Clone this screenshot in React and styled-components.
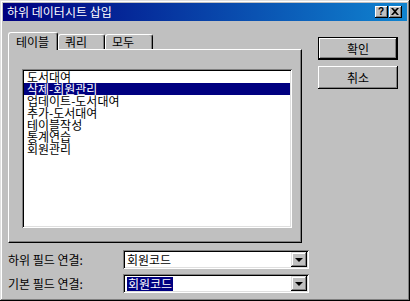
import React from 'react'
import styled, { createGlobalStyle } from 'styled-components'

const GlobalStyle = createGlobalStyle`
    html, body {
        margin:0;
        padding:0;
        background:#c0c0c0;
    }
    body {
        font-family:'Noto Sans CJK KR', 'Noto Sans', sans-serif;
        font-size:12px;
    }
`

const Window = styled.div`
    box-sizing:border-box;
    width:410px;
    height:301px;
    padding:3px;
    background:#c0c0c0;
    box-shadow:inset -1px -1px #000, inset 1px 1px #dfdfdf, inset -2px -2px #808080, inset 2px 2px #fff;
    display:flex;
    flex-direction:column;
`

const TitleBar = styled.div`
    height:18px;
    display:flex;
    align-items:center;
    padding:0 5px 0 4px;
    background:linear-gradient(90deg, #000080, #1084d0);
    color:#fff;
    font-size:12px;
    line-height:18px;
`

const TitleText = styled.div`
    flex:1;
    white-space:nowrap;
`

const CaptionButton = styled.div`
    box-sizing:border-box;
    width:13px;
    height:12px;
    margin-left:${p => p.gap || 0}px;
    background:#c0c0c0;
    box-shadow:inset -1px -1px #000, inset 1px 1px #fff, inset -2px -2px #808080;
    display:flex;
    align-items:center;
    justify-content:center;
    color:#000;
    font-family:'Liberation Sans', Arial, sans-serif;
    font-weight:bold;
    font-size:10px;
    line-height:10px;
    padding:0 1px 1px 0;
`

const Body = styled.div`
    flex:1;
    display:flex;
    padding:0 0 0 5px;
`

const LeftColumn = styled.div`
    width:301px;
    padding-top:11px;
`

const TabStrip = styled.div`
    display:flex;
    align-items:flex-end;
    height:17px;
    width:294px;
`

const Tab = styled.div`
    box-sizing:border-box;
    position:relative;
    width:${p => p.w}px;
    height:${p => (p.active ? 18 : 15)}px;
    margin-bottom:${p => (p.active ? -1 : 0)}px;
    z-index:${p => (p.active ? 1 : 0)};
    padding-left:${p => p.pad}px;
    background:#c0c0c0;
    border-top:1px solid #fff;
    border-left:1px solid #fff;
    border-right:1px solid #000;
    border-radius:3px 3px 0 0;
    box-shadow:inset -1px 0 #808080;
    line-height:${p => (p.active ? 17 : 14)}px;
    color:#000;
    white-space:nowrap;
`

const Panel = styled.div`
    box-sizing:border-box;
    width:294px;
    height:194px;
    padding:19px 0 0 13px;
    border-top:1px solid #fff;
    border-left:1px solid #fff;
    border-right:1px solid #000;
    border-bottom:1px solid #000;
    box-shadow:inset -1px -1px #808080;
`

const ListBox = styled.div`
    box-sizing:border-box;
    width:270px;
    height:159px;
    padding:2px;
    background:#fff;
    box-shadow:inset 1px 1px #808080, inset -1px -1px #fff, inset 2px 2px #000, inset -2px -2px #dfdfdf;
`

const ListItem = styled.div`
    height:12px;
    line-height:12px;
    padding-left:3px;
    background:${p => (p.selected ? '#000080' : 'transparent')};
    color:${p => (p.selected ? '#fff' : '#000')};
    white-space:nowrap;
`

const FieldGrid = styled.div`
    display:grid;
    grid-template-columns:115px 186px;
    row-gap:5px;
    margin-top:7px;
    align-items:center;
`

const Label = styled.div`
    color:#000;
    white-space:nowrap;
`

const Combo = styled.div`
    box-sizing:border-box;
    height:19px;
    padding:2px;
    display:flex;
    background:#fff;
    box-shadow:inset 1px 1px #808080, inset -1px -1px #fff, inset 2px 2px #000, inset -2px -2px #dfdfdf;
`

const ComboText = styled.div`
    flex:1;
    padding-left:2px;
    line-height:15px;
    color:#000;
`

const Highlight = styled.span`
    display:inline-block;
    background:#000080;
    color:#fff;
    line-height:14px;
    padding:0 1px;
`

const DropButton = styled.div`
    box-sizing:border-box;
    width:16px;
    height:15px;
    background:#c0c0c0;
    box-shadow:inset -1px -1px #000, inset 1px 1px #dfdfdf, inset -2px -2px #808080, inset 2px 2px #fff;
    display:flex;
    align-items:center;
    justify-content:center;
    &::after {
        content:'';
        width:0;
        height:0;
        border-left:4px solid transparent;
        border-right:4px solid transparent;
        border-top:4px solid #000;
        margin:1px 1px 0 0;
    }
`

const RightColumn = styled.div`
    display:flex;
    flex-direction:column;
    gap:6px;
    padding-top:16px;
    margin-left:9px;
`

const Button = styled.div`
    box-sizing:border-box;
    width:80px;
    height:23px;
    display:flex;
    align-items:center;
    justify-content:center;
    background:#c0c0c0;
    color:#000;
    box-shadow:${p => (p.primary
        ? 'inset -1px -1px #000, inset 1px 1px #000, inset -2px -2px #000, inset 2px 2px #fff, inset -3px -3px #808080'
        : 'inset -1px -1px #000, inset 1px 1px #fff, inset -2px -2px #808080')};
`

const tables = [
    '도서대여',
    '삭제-회원관리',
    '업데이트-도서대여',
    '추가-도서대여',
    '테이블작성',
    '통계연습',
    '회원관리'
]

const CloseIcon = () => (
    <svg width="8" height="7" viewBox="0 0 8 7">
        <path d="M0 0h2l2 2 2-2h2L5 3.5 8 7H6L4 5 2 7H0l3-3.5z" fill="#000" />
    </svg>
)

const App = () => {
    return (
        <>
            <GlobalStyle />
            <Window>
                <TitleBar>
                    <TitleText>하위 데이터시트 삽입</TitleText>
                    <CaptionButton>?</CaptionButton>
                    <CaptionButton gap={1}><CloseIcon /></CaptionButton>
                </TitleBar>
                <Body>
                    <LeftColumn>
                        <TabStrip>
                            <Tab active w={50} pad={7}>테이블</Tab>
                            <Tab w={47} pad={6}>쿼리</Tab>
                            <Tab w={48} pad={6}>모두</Tab>
                        </TabStrip>
                        <Panel>
                            <ListBox>
                                {tables.map((t, i) => (
                                    <ListItem key={t} selected={i === 1}>{t}</ListItem>
                                ))}
                            </ListBox>
                        </Panel>
                        <FieldGrid>
                            <Label>하위 필드 연결:</Label>
                            <Combo>
                                <ComboText>회원코드</ComboText>
                                <DropButton />
                            </Combo>
                            <Label>기본 필드 연결:</Label>
                            <Combo>
                                <ComboText><Highlight>회원코드</Highlight></ComboText>
                                <DropButton />
                            </Combo>
                        </FieldGrid>
                    </LeftColumn>
                    <RightColumn>
                        <Button primary>확인</Button>
                        <Button>취소</Button>
                    </RightColumn>
                </Body>
            </Window>
        </>
    )
}

export default App
